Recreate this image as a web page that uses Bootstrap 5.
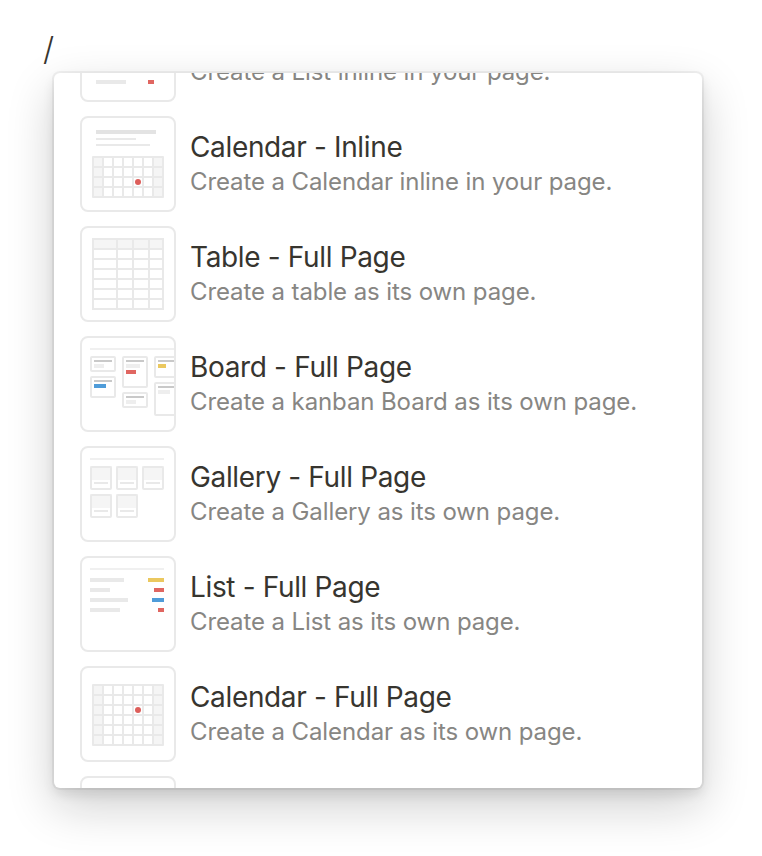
<!DOCTYPE html>
<html lang="en">
<head>
<meta charset="utf-8">
<title>Slash menu</title>
<link href="https://cdn.jsdelivr.net/npm/bootstrap@5.3.0/dist/css/bootstrap.min.css" rel="stylesheet">
<style>
html,body{height:100%;overflow:hidden;background:#fff}
body{font-family:Inter,"Liberation Sans",sans-serif;color:#37352f}
.page-wrap{padding:0 60px 0 54px}
.slash-line{height:73px;font-size:32px;font-weight:300;line-height:38px;padding-top:30px;margin-left:-11px;color:#37352f}
.menu-panel{width:648px;height:715px;overflow:hidden;background:#fff;border-radius:6px;box-shadow:0 0 0 2px rgba(15,15,15,.05),0 6px 12px rgba(15,15,15,.1),0 18px 48px rgba(15,15,15,.2)}
.menu-list{margin-top:-74px;padding-left:26px}
.menu-row{height:110px;gap:14px}
.thumb-box{width:96px;height:96px;flex:none;border:2px solid #e9e9e9;border-radius:8px;overflow:hidden;background:#fff}
.thumb-box svg{display:block;width:92px;height:92px}
.row-text{padding-bottom:2px}
.row-title{font-size:28px;line-height:34px;color:#37352f;letter-spacing:-.35px}
.row-sub{font-size:24px;line-height:30px;color:#878683;letter-spacing:-.1px;margin-top:3px}
</style>
</head>
<body>
<svg width="0" height="0" class="position-absolute">
<defs>
<pattern id="cellgrid" x="0" y="0" width="10" height="10" patternUnits="userSpaceOnUse"><rect width="8" height="8" fill="#fff"/></pattern>
<pattern id="cellgridGrey" x="0" y="0" width="10" height="10" patternUnits="userSpaceOnUse"><rect width="8" height="8" fill="#f5f5f5"/></pattern>
</defs>
</svg>
<div class="page-wrap">
<div class="slash-line">/</div>
<div class="menu-panel">
<div class="menu-list d-flex flex-column">

<div class="menu-row d-flex align-items-center">
<div class="thumb-box"><svg viewBox="2 2 92 92">
<rect x="10" y="12" width="74" height="2" fill="#f0f0f0"/>
<rect x="10" y="22" width="34" height="4" fill="#e9e9e9"/><rect x="68" y="22" width="16" height="4" fill="#ebc85f"/>
<rect x="10" y="32" width="20" height="4" fill="#e9e9e9"/><rect x="74" y="32" width="10" height="4" fill="#e06661"/>
<rect x="10" y="42" width="38" height="4" fill="#e9e9e9"/><rect x="72" y="42" width="12" height="4" fill="#4f9cd9"/>
<rect x="16" y="74" width="30" height="4" fill="#e9e9e9"/><rect x="68" y="74" width="6" height="4" fill="#e06661"/>
</svg></div>
<div class="row-text"><div class="row-title">List - Inline</div><div class="row-sub">Create a List inline in your page.</div></div>
</div>

<div class="menu-row d-flex align-items-center">
<div class="thumb-box"><svg viewBox="2 2 92 92">
<rect x="16" y="14" width="60" height="4" fill="#e3e3e3"/>
<rect x="16" y="22" width="40" height="2" fill="#e9e9e9"/>
<rect x="16" y="28" width="54" height="2" fill="#e9e9e9"/>
<rect x="12" y="40" width="72" height="42" rx="1" fill="#e9e9e9"/>
<g transform="translate(14 42)"><rect width="68" height="38" fill="url(#cellgrid)"/><rect width="8" height="38" fill="url(#cellgridGrey)"/><rect x="60" width="8" height="38" fill="url(#cellgridGrey)"/></g>
<circle cx="58" cy="66" r="3" fill="#dd5e5a"/>
</svg></div>
<div class="row-text"><div class="row-title">Calendar - Inline</div><div class="row-sub">Create a Calendar inline in your page.</div></div>
</div>

<div class="menu-row d-flex align-items-center">
<div class="thumb-box"><svg viewBox="2 2 92 92">
<rect x="12" y="12" width="72" height="72" fill="#e9e9e9"/>
<rect x="14" y="14" width="22" height="8" fill="#f5f5f5"/><rect x="38" y="14" width="14" height="8" fill="#f5f5f5"/><rect x="54" y="14" width="14" height="8" fill="#f5f5f5"/><rect x="70" y="14" width="12" height="8" fill="#f5f5f5"/>
<g fill="#fff">
<rect x="14" y="24" width="22" height="8"/><rect x="38" y="24" width="14" height="8"/><rect x="54" y="24" width="14" height="8"/><rect x="70" y="24" width="12" height="8"/>
<rect x="14" y="34" width="22" height="8"/><rect x="38" y="34" width="14" height="8"/><rect x="54" y="34" width="14" height="8"/><rect x="70" y="34" width="12" height="8"/>
<rect x="14" y="44" width="22" height="8"/><rect x="38" y="44" width="14" height="8"/><rect x="54" y="44" width="14" height="8"/><rect x="70" y="44" width="12" height="8"/>
<rect x="14" y="54" width="22" height="8"/><rect x="38" y="54" width="14" height="8"/><rect x="54" y="54" width="14" height="8"/><rect x="70" y="54" width="12" height="8"/>
<rect x="14" y="64" width="22" height="8"/><rect x="38" y="64" width="14" height="8"/><rect x="54" y="64" width="14" height="8"/><rect x="70" y="64" width="12" height="8"/>
<rect x="14" y="74" width="22" height="8"/><rect x="38" y="74" width="14" height="8"/><rect x="54" y="74" width="14" height="8"/><rect x="70" y="74" width="12" height="8"/>
</g>
</svg></div>
<div class="row-text"><div class="row-title">Table - Full Page</div><div class="row-sub">Create a table as its own page.</div></div>
</div>

<div class="menu-row d-flex align-items-center">
<div class="thumb-box"><svg viewBox="2 2 92 92">
<rect x="10" y="12" width="90" height="2" fill="#f0f0f0"/>
<g fill="#fff" stroke="#e9e9e9" stroke-width="2">
<rect x="11" y="21" width="24" height="14" rx="1"/><rect x="11" y="41" width="24" height="20" rx="1"/>
<rect x="43" y="21" width="24" height="30" rx="1"/><rect x="43" y="57" width="24" height="14" rx="1"/>
<rect x="75" y="21" width="24" height="20" rx="1"/><rect x="75" y="47" width="24" height="32" rx="1"/>
</g>
<g fill="#c9c9c9">
<rect x="14" y="24" width="18" height="2"/><rect x="14" y="44" width="18" height="2"/>
<rect x="46" y="24" width="18" height="2"/><rect x="46" y="60" width="18" height="2"/>
<rect x="78" y="24" width="18" height="2"/><rect x="78" y="50" width="18" height="2"/>
</g>
<g fill="#eeeeee">
<rect x="14" y="28" width="10" height="4"/><rect x="46" y="28" width="14" height="4"/><rect x="46" y="64" width="10" height="4"/><rect x="78" y="54" width="12" height="4"/>
</g>
<rect x="14" y="48" width="12" height="4" fill="#4f9cd9"/>
<rect x="46" y="34" width="10" height="4" fill="#e06661"/>
<rect x="78" y="28" width="8" height="4" fill="#ebc85f"/>
</svg></div>
<div class="row-text"><div class="row-title">Board - Full Page</div><div class="row-sub">Create a kanban Board as its own page.</div></div>
</div>

<div class="menu-row d-flex align-items-center">
<div class="thumb-box"><svg viewBox="2 2 92 92">
<rect x="10" y="12" width="74" height="2" fill="#f0f0f0"/>
<g fill="#f5f5f5">
<rect x="10" y="20" width="22" height="14"/><rect x="36" y="20" width="22" height="14"/><rect x="62" y="20" width="22" height="14"/>
<rect x="10" y="48" width="22" height="14"/><rect x="36" y="48" width="22" height="14"/>
</g>
<g fill="none" stroke="#e9e9e9" stroke-width="2">
<rect x="11" y="21" width="20" height="22" rx="1"/><rect x="37" y="21" width="20" height="22" rx="1"/><rect x="63" y="21" width="20" height="22" rx="1"/>
<rect x="11" y="49" width="20" height="22" rx="1"/><rect x="37" y="49" width="20" height="22" rx="1"/>
</g>
<g fill="#e9e9e9">
<rect x="14" y="36" width="14" height="2"/><rect x="40" y="36" width="14" height="2"/><rect x="66" y="36" width="14" height="2"/>
<rect x="14" y="64" width="14" height="2"/><rect x="40" y="64" width="14" height="2"/>
</g>
</svg></div>
<div class="row-text"><div class="row-title">Gallery - Full Page</div><div class="row-sub">Create a Gallery as its own page.</div></div>
</div>

<div class="menu-row d-flex align-items-center">
<div class="thumb-box"><svg viewBox="2 2 92 92">
<rect x="10" y="12" width="74" height="2" fill="#f0f0f0"/>
<rect x="10" y="22" width="34" height="4" fill="#e9e9e9"/><rect x="68" y="22" width="16" height="4" fill="#ebc85f"/>
<rect x="10" y="32" width="20" height="4" fill="#e9e9e9"/><rect x="74" y="32" width="10" height="4" fill="#e06661"/>
<rect x="10" y="42" width="38" height="4" fill="#e9e9e9"/><rect x="72" y="42" width="12" height="4" fill="#4f9cd9"/>
<rect x="10" y="52" width="30" height="4" fill="#e9e9e9"/><rect x="78" y="52" width="6" height="4" fill="#e06661"/>
</svg></div>
<div class="row-text"><div class="row-title">List - Full Page</div><div class="row-sub">Create a List as its own page.</div></div>
</div>

<div class="menu-row d-flex align-items-center">
<div class="thumb-box"><svg viewBox="2 2 92 92">
<rect x="12" y="18" width="72" height="62" rx="1" fill="#e9e9e9"/>
<g transform="translate(14 20)"><rect width="68" height="58" fill="url(#cellgrid)"/><rect width="8" height="58" fill="url(#cellgridGrey)"/><rect x="60" width="8" height="58" fill="url(#cellgridGrey)"/></g>
<circle cx="58" cy="44" r="3" fill="#dd5e5a"/>
</svg></div>
<div class="row-text"><div class="row-title">Calendar - Full Page</div><div class="row-sub">Create a Calendar as its own page.</div></div>
</div>

<div class="menu-row d-flex align-items-center">
<div class="thumb-box"></div>
</div>

</div>
</div>
</div>
</body>
</html>
